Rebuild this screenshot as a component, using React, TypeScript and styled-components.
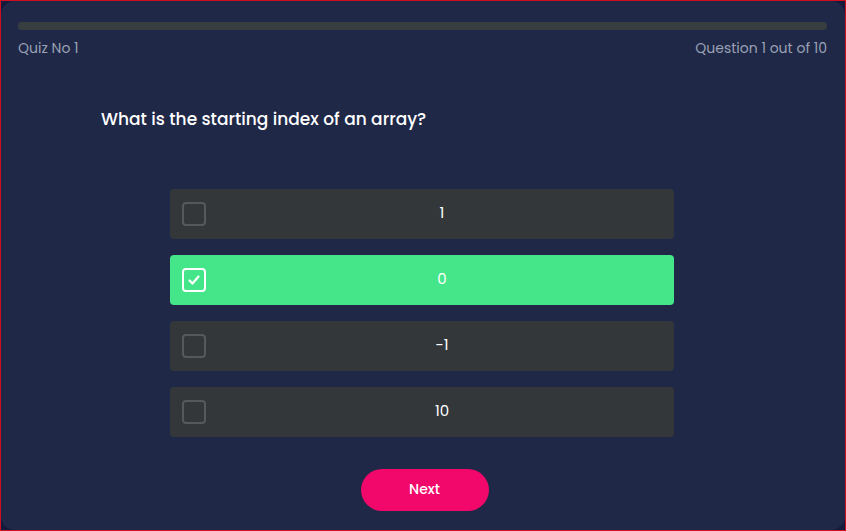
import React, { useState } from "react";
import styled, { createGlobalStyle } from "styled-components";

const Global = createGlobalStyle`
  html, body { margin: 0; padding: 0; background: #141a3c; }
  * { box-sizing: border-box; }
`;

const Frame = styled.div`
  width: 846px;
  height: 531px;
  border: 1px solid #d0101e;
  background: #141a3c;
  font-family: "Poppins", "Open Sans", "Noto Sans", sans-serif;
`;

const Panel = styled.div`
  height: 100%;
  background: #1f2847;
  border-radius: 14px;
  padding: 21px 18px 0 17px;
  display: flex;
  flex-direction: column;
`;

const Track = styled.div`
  height: 8px;
  border-radius: 4px;
  background: #383d3f;
`;

const Meta = styled.div`
  display: flex;
  justify-content: space-between;
  margin-top: 8px;
  font-size: 14px;
  color: #9aa1b5;
`;

const Question = styled.h2`
  margin: 47px 0 0 83px;
  font-size: 17px;
  font-weight: 500;
  color: #ffffff;
`;

const Options = styled.div`
  display: flex;
  flex-direction: column;
  gap: 16px;
  width: 504px;
  margin: 57px 0 0 152px;
`;

const Option = styled.button<{ $selected: boolean }>`
  display: flex;
  align-items: center;
  height: 50px;
  padding: 0 12px;
  border: none;
  border-radius: 4px;
  background: ${(p) => (p.$selected ? "#45e68a" : "#343739")};
  color: #ffffff;
  font-family: inherit;
  font-size: 15px;
  cursor: pointer;
`;

const Box = styled.span<{ $selected: boolean }>`
  width: 24px;
  height: 24px;
  border-radius: 4px;
  border: 2px solid ${(p) => (p.$selected ? "#ffffff" : "#56595b")};
  display: flex;
  align-items: center;
  justify-content: center;
  flex-shrink: 0;
`;

const Label = styled.span`
  flex: 1;
  margin-left: 16px;
  padding-bottom: 4px;
  text-align: center;
`;

const Footer = styled.div`
  display: flex;
  justify-content: center;
  margin-top: 32px;
  padding-left: 4px;
`;

const NextButton = styled.button`
  width: 128px;
  height: 42px;
  padding-bottom: 2px;
  border: none;
  border-radius: 21px;
  background: #f2086b;
  color: #ffffff;
  font-family: inherit;
  font-size: 14px;
  font-weight: 500;
  cursor: pointer;
`;

const options = ["1", "0", "-1", "10"];

export default function App() {
  const [selected, setSelected] = useState(1);
  return (
    <>
      <Global />
      <Frame>
        <Panel>
          <Track />
          <Meta>
            <span>Quiz No 1</span>
            <span>Question 1 out of 10</span>
          </Meta>
          <Question>What is the starting index of an array?</Question>
          <Options>
            {options.map((o, i) => (
              <Option key={o} $selected={i === selected} onClick={() => setSelected(i)}>
                <Box $selected={i === selected}>
                  {i === selected && (
                    <svg width="14" height="14" viewBox="0 0 14 14">
                      <path d="M2.5 7.5 L5.5 10.5 L11.5 3.5" fill="none" stroke="#fff" strokeWidth="2.2" strokeLinecap="round" strokeLinejoin="round" />
                    </svg>
                  )}
                </Box>
                <Label>{o}</Label>
              </Option>
            ))}
          </Options>
          <Footer>
            <NextButton>Next</NextButton>
          </Footer>
        </Panel>
      </Frame>
    </>
  );
}
